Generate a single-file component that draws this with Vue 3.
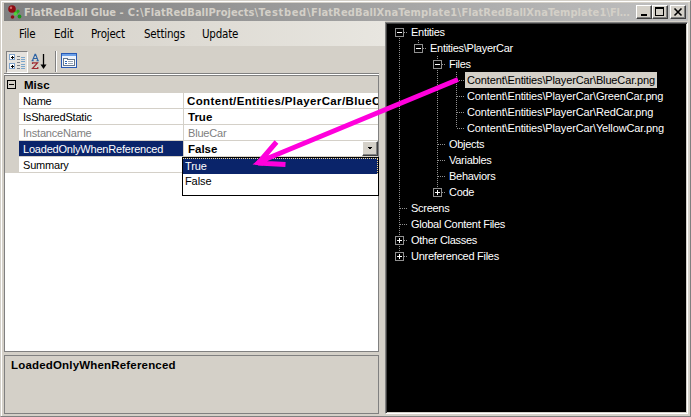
<script setup>
const caption = [
  { text: 'FlatRedBall Glue', x: 0, w: 92 },
  { text: '- C:\\', x: 95.5, w: 24 },
  { text: 'FlatRedBallProjects\\', x: 120, w: 114 },
  { text: 'Testbed\\', x: 234.5, w: 52 },
  { text: 'FlatRedBallXnaTemplate1\\', x: 287, w: 150 },
  { text: 'FlatRedBallXnaTemplate1\\', x: 437.5, w: 148.5 },
  { text: 'Fl...', x: 586, w: 20 },
]

const menus = [
  { label: 'File', width: 35 },
  { label: 'Edit', width: 37 },
  { label: 'Project', width: 53 },
  { label: 'Settings', width: 58 },
  { label: 'Update', width: 60 },
]

const props = [
  { name: 'Name', value: 'Content/Entities/PlayerCar/BlueC', wide: true },
  { name: 'IsSharedStatic', value: 'True' },
  { name: 'InstanceName', value: 'BlueCar', readonly: true },
  { name: 'LoadedOnlyWhenReferenced', value: 'False', selected: true },
  { name: 'Summary', value: '' },
]

// cells: '.' blank, '|' guide, 'T' tee, 'L' last branch, 'o' expanded root,
// '-' expanded last item, 'm' expanded with siblings below,
// 'c' collapsed with siblings below, 'e' collapsed last item
const tree = [
  { cells: 'o', label: 'Entities' },
  { cells: '|-', label: 'Entities\\PlayerCar' },
  { cells: '|.m', label: 'Files' },
  { cells: '|.|T', label: 'Content\\Entities\\PlayerCar\\BlueCar.png', selected: true },
  { cells: '|.|T', label: 'Content\\Entities\\PlayerCar\\GreenCar.png' },
  { cells: '|.|T', label: 'Content\\Entities\\PlayerCar\\RedCar.png' },
  { cells: '|.|L', label: 'Content\\Entities\\PlayerCar\\YellowCar.png' },
  { cells: '|.T', label: 'Objects' },
  { cells: '|.T', label: 'Variables' },
  { cells: '|.T', label: 'Behaviors' },
  { cells: '|.e', label: 'Code' },
  { cells: 'T', label: 'Screens' },
  { cells: 'T', label: 'Global Content Files' },
  { cells: 'c', label: 'Other Classes' },
  { cells: 'e', label: 'Unreferenced Files' },
]
const up = (c) => '|TL-mce'.includes(c)
const down = (c) => '|Tomc'.includes(c)
const across = (c) => 'TLo-mce'.includes(c)
const box = (c) => 'o-mce'.includes(c)
const plus = (c) => 'ce'.includes(c)
</script>

<template>
  <div class="window">
    <header class="title">
      <svg class="logo" width="16" height="16" viewBox="0 0 16 16">
        <path d="M6 6l4 4M9 10l3-3" stroke="#39b526" stroke-width="2" />
        <circle cx="5" cy="5" r="3.8" fill="#8f0c12" />
        <circle cx="4" cy="3.8" r="1.2" fill="#cf6a68" />
        <circle cx="11" cy="7" r="1.6" fill="#28a81f" />
        <circle cx="8.500" cy="10" r="1.8" fill="#52cf3c" />
        <circle cx="12.500" cy="12.500" r="1.9" fill="#169616" />
        <circle cx="5.500" cy="13" r="1.8" fill="#8f0b12" />
      </svg>
      <svg class="caption" width="606" height="18">
        <text v-for="s in caption" :key="s.x" :x="s.x" y="13" :textLength="s.w">{{ s.text }}</text>
      </svg>
      <div class="controls">
        <i class="wbtn"><svg width="12" height="10" shape-rendering="crispEdges"><path d="M3 8h6" stroke="#000" stroke-width="2" /></svg></i>
        <i class="wbtn"><svg width="12" height="10" shape-rendering="crispEdges"><path d="M1 1h9M1.5 1v8M9.5 1v8M1 8.5h9" stroke="#000" fill="none" /><path d="M1 1h9" stroke="#000" stroke-width="2" /></svg></i>
        <i class="wbtn close"><svg width="12" height="10"><path d="M2.5 1.5l7 7M9.5 1.5l-7 7" stroke="#000" stroke-width="1.6" /></svg></i>
      </div>
    </header>

    <div class="body">
      <section class="left">
        <nav class="menu">
          <span v-for="m in menus" :key="m.label" :style="{ width: m.width + 'px' }">{{ m.label }}</span>
        </nav>
        <div class="toolbar">
          <div class="tool pressed">
            <svg width="18" height="18" viewBox="0 0 18 18" shape-rendering="crispEdges">
              <g fill="#fff" stroke="#7fa3cc"><rect x="1.5" y="1.5" width="5" height="5" /><rect x="1.5" y="10.5" width="5" height="5" /></g>
              <path d="M3 4h3M4.5 2.5v3M3 13h3M4.5 11.5v3" stroke="#000" />
              <path d="M9 3.5h3M9 6.5h3M9 9.5h3M9 12.5h3M9 15.5h3" stroke="#7b8088" />
              <path d="M13 4.5h4M13 6.5h4M13 8.5h4M13 11.5h4M13 13.5h4M13 15.5h4" stroke="#7aa6cb" />
            </svg>
          </div>
          <div class="tool sort">
            <svg width="18" height="18" viewBox="0 0 18 18">
              <path d="M1.500 7.500L4 1.200h.6L7 7.500M2.500 5.500h4M.5 7.700h2.200M5.500 7.700h2.300" fill="none" stroke="#2c62a4" stroke-width="1.1" />
              <path d="M1.500 11V9.800h5L1.500 15.500h5.300v-1.500" fill="none" stroke="#9e2a32" stroke-width="1.2" />
              <path d="M12.500 1v13" stroke="#000" stroke-width="1.300" />
              <path d="M9.500 11.500h6l-3 4.500z" fill="#000" />
            </svg>
          </div>
          <div class="sep"></div>
          <div class="tool">
            <svg width="16" height="15" viewBox="0 0 16 15" shape-rendering="crispEdges">
              <rect width="16" height="15" fill="#285ab4" /><rect x="1" y="1" width="14" height="2" fill="#6ca0e8" />
              <rect x="1" y="3" width="14" height="11" fill="#eef3fb" />
              <path d="M2.5 5.500h4v1h7v6h-11z" fill="#fff" stroke="#66788e" />
              <path d="M4 8.500h2M4 10.500h2" stroke="#2f67b4" /><path d="M7 8.500h5M7 10.500h5" stroke="#96a5b8" />
            </svg>
          </div>
        </div>
        <div class="grid">
          <div class="cat"><svg width="9" height="9" shape-rendering="crispEdges"><rect x=".5" y=".5" width="8" height="8" fill="none" stroke="#000" /><path d="M2 4.500h5" stroke="#000" /></svg><b>Misc</b></div>
          <div v-for="p in props" :key="p.name" class="prop" :class="{ ro: p.readonly, sel: p.selected }">
            <div class="name"><span>{{ p.name }}</span></div>
            <div class="value" :class="{ wide: p.wide }"><span>{{ p.value }}</span>
              <i v-if="p.selected" class="drop"><svg width="4" height="2" shape-rendering="crispEdges"><path d="M0 0h4v1H3v1H1V1H0z" /></svg></i>
            </div>
          </div>
          <div class="list">
            <div class="opt on">True</div>
            <div class="opt">False</div>
          </div>
        </div>
        <div class="help"><b>LoadedOnlyWhenReferenced</b></div>
      </section>

      <section class="tree">
        <div v-for="n in tree" :key="n.label" class="node">
          <svg v-for="(c, i) in n.cells" :key="i" width="19" height="16" shape-rendering="crispEdges">
            <g stroke="#909090" stroke-dasharray="1 1">
              <path v-if="up(c)" d="M9.500 0v8" />
              <path v-if="down(c)" d="M9.500 8v8" />
              <path v-if="across(c)" d="M10 8.500h8" />
            </g>
            <g v-if="box(c)">
              <rect x="5.500" y="4.500" width="8" height="8" fill="#000" stroke="#909090" />
              <path d="M7 8.500h5" stroke="#fff" />
              <path v-if="plus(c)" d="M9.500 6v5" stroke="#fff" />
            </g>
          </svg>
          <span class="label" :class="{ picked: n.selected, file: n.cells.length === 4 }">{{ n.label }}</span>
        </div>
      </section>
    </div>

    <svg class="arrow" width="220" height="100" viewBox="248 73 220 100">
      <path d="M458 79.500L260 161.500M276.500 142L258 163.500M285.500 164.500L258 163" fill="none" stroke="#ff00dc" stroke-width="5" />
      <path d="M252.500 164.500L263 156v9.500z" fill="#ff00dc" />
    </svg>
  </div>
</template>

<style>
body { overflow: hidden; background: #d4d0c8; }
</style>
<style scoped>
* { box-sizing: border-box; }
.window { position: relative; width: 691px; height: 417px; background: #d4d0c8; border: 1px solid #d4d0c8; border-right-color: #808080; border-bottom-color: #808080; box-shadow: inset 1px 1px #fff; padding: 2px 2px 2px 3px; font: 11px/16px "Liberation Sans", Arial, sans-serif; color: #000; display: flex; flex-direction: column; }
svg { display: block; flex: none; }
i { font-style: normal; }
.title { height: 18px; flex: none; background: linear-gradient(90deg, #808080, #c0c0c0); display: flex; align-items: center; padding: 0 0 0 3px; }
.logo { margin-right: 1px; }
.caption { font: bold 11px "DejaVu Sans Condensed", "DejaVu Sans", sans-serif; fill: #d4d0c8; overflow: visible; }
.controls { display: flex; margin-left: 6px; }
.wbtn { width: 16px; height: 14px; background: #d4d0c8; border: 1px solid #fff; border-right-color: #404040; border-bottom-color: #404040; box-shadow: inset -1px -1px #808080; padding: 1px; }
.close { margin-left: 2px; }
.body { flex: 1; display: flex; }
.left { width: 375px; display: flex; flex-direction: column; }
.menu { height: 25px; width: 381px; padding-left: 15px; display: flex; align-items: center; font: 11.5px/16px "DejaVu Sans Condensed", sans-serif; background: linear-gradient(90deg, #d4d0c8, #e8e6e0 100%); letter-spacing: -.2px; }
.toolbar { height: 28px; border-bottom: 1px solid #808080; display: flex; padding: 5px 0 0 2px; }
.tool { height: 22px; display: flex; }
.pressed { width: 22px; height: 22px; border: 1px solid #808080; border-right-color: #fff; border-bottom-color: #fff; background: #e5e2dd; padding: 1px; }
.sort { margin-left: 3px; padding-top: 2px; }
.sep { width: 1px; height: 21px; background: #808080; box-shadow: 1px 0 #fff; margin: 0 5px 0 6px; }
.sep + .tool { padding-top: 2px; }
.grid { position: relative; margin-top: 1px; height: 277px; border: 1px solid #808080; background: #fff; box-shadow: 0 -1px #fff; }
.cat { height: 17px; background: #d4d0c8; display: flex; align-items: center; padding-left: 2px; font-size: 11.5px; }
.cat b { margin-left: 8px; }
.prop { height: 16px; display: flex; border-left: 14px solid #d4d0c8; line-height: 16px; white-space: nowrap; }
.name { width: 165px; border-right: 1px solid #d4d0c8; border-bottom: 1px solid #d4d0c8; padding-left: 4px; letter-spacing: -.2px; }
.value { flex: 1; min-width: 0; border-bottom: 1px solid #d4d0c8; padding-left: 4px; font-weight: bold; overflow: hidden; display: flex; justify-content: space-between; font-size: 11.5px; }
.wide { padding-left: 3px; letter-spacing: .38px; }
.ro { color: #808080; }
.ro .value { font-weight: normal; font-size: 11px; letter-spacing: -.2px; }
.sel .name { background: #0a246a; color: #fff; }
.drop { width: 16px; height: 15px; border: 1px solid #fff; border-right-color: #404040; border-bottom-color: #404040; box-shadow: inset -1px -1px #808080; background: #d4d0c8; padding: 5px 0 0 5px; }
.list { position: absolute; left: 177px; top: 81px; width: 197px; height: 39px; border: 1px solid #000; background: #fff; line-height: 15px; letter-spacing: -.1px; }
.opt { height: 15px; padding-left: 2px; }
.on { height: 16px; background: #0a246a; color: #fff; border: 1px dotted #f5db95; border-left: 0; border-bottom: 0; }
.help { margin-top: 3px; height: 59px; border: 1px solid #808080; padding: 1px 6px; font-size: 11.5px; letter-spacing: .18px; }
.tree { margin-left: 6px; margin-top: 1px; width: 303px; height: 392px; background: #000; color: #fff; border: 1px solid #808080; border-right-color: #fff; border-bottom-color: #fff; box-shadow: inset 1px 1px #404040, inset -1px -1px #d4d0c8; padding: 1px 0 0 4px; }
.node { height: 16px; display: flex; white-space: nowrap; }
.label { padding: 0 2px; line-height: 16px; letter-spacing: -.28px; }
.file { letter-spacing: -.14px; margin-left: -1px; }
.picked { background: #d4d0c8; color: #000; }
.arrow { position: absolute; left: 247px; top: 72px; }
</style>
